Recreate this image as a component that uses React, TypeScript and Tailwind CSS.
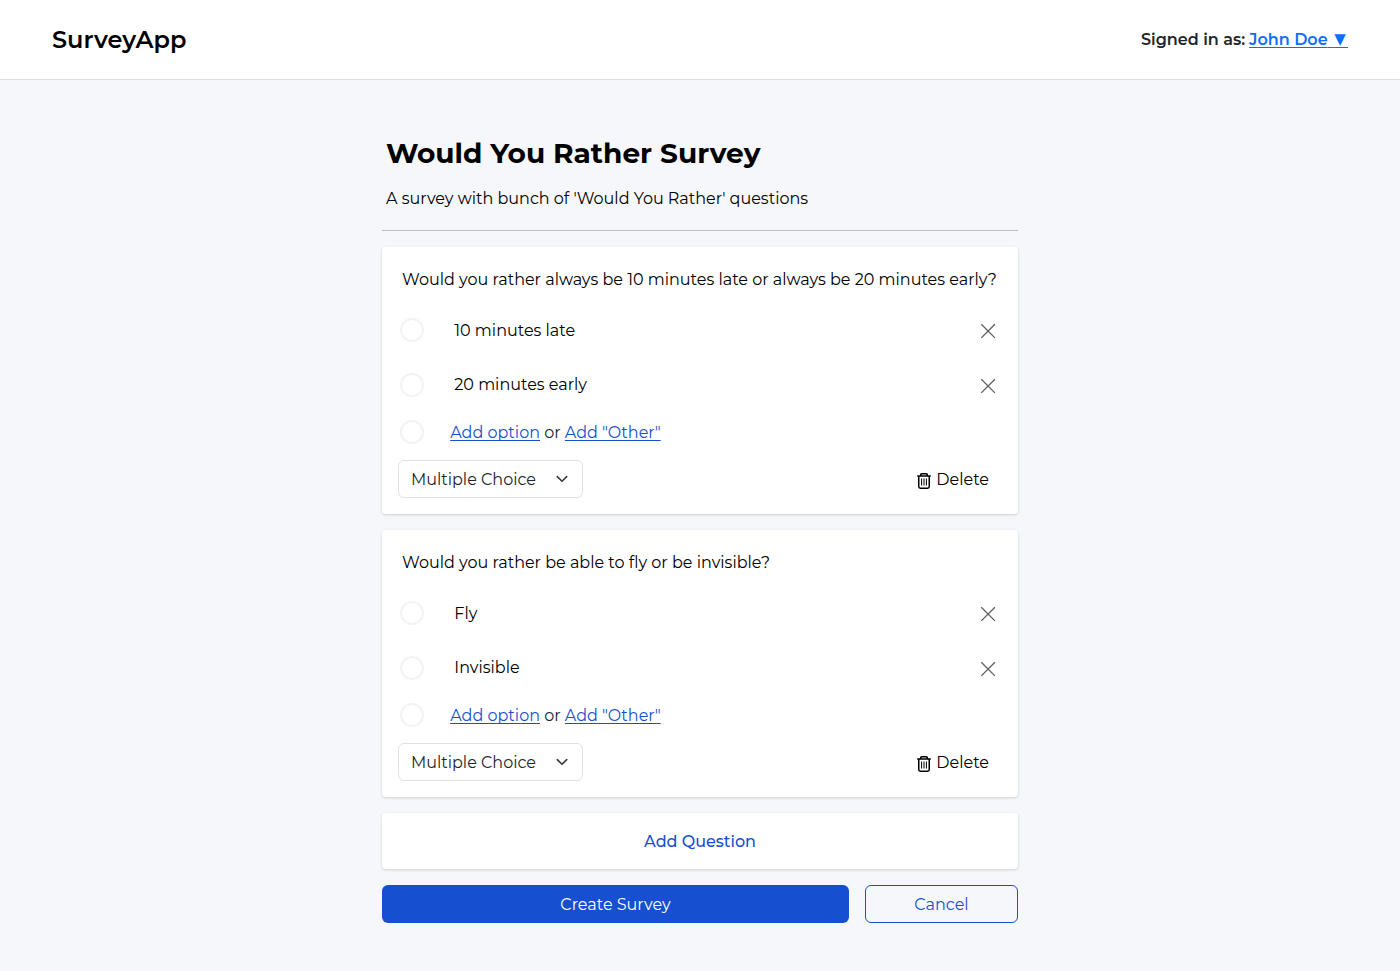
import React from "react";

type Question = { text: string; options: string[] };

const questions: Question[] = [
  {
    text: "Would you rather always be 10 minutes late or always be 20 minutes early?",
    options: ["10 minutes late", "20 minutes early"],
  },
  {
    text: "Would you rather be able to fly or be invisible?",
    options: ["Fly", "Invisible"],
  },
];

function Radio() {
  return <span className="h-6 w-6 shrink-0 rounded-full border-2 border-[#f3f3f3] bg-white" />;
}

function CloseIcon() {
  return (
    <svg width="16" height="16" viewBox="0 0 16 16" fill="none" stroke="#5c5e61" strokeWidth="1.3">
      <path d="M1.3 1.3l13.6 13.6M14.9 1.3L1.3 14.9" />
    </svg>
  );
}

function TrashIcon() {
  return (
    <svg width="16" height="18" viewBox="0 0 16 18" fill="none" stroke="#000" strokeWidth="1.5">
      <path d="M1.2 4.1h13.6M4.7 4V2.9A1.1 1.1 0 0 1 5.8 1.8h4.4a1.1 1.1 0 0 1 1.1 1.1V4M2.75 4.2V14.6a1.6 1.6 0 0 0 1.6 1.6h7.3a1.6 1.6 0 0 0 1.6-1.6V4.2" />
      <path d="M5.6 6.5v7M8 6.5v7M10.4 6.5v7" strokeWidth="1" />
    </svg>
  );
}

function QuestionCard({ q }: { q: Question }) {
  return (
    <section className="mb-4 h-[267px] rounded bg-white px-4 pt-4 shadow-[0_1px_3px_rgba(0,0,0,0.16)]">
      <div className="flex h-8 items-center whitespace-nowrap pl-1 pt-0.5 text-black">{q.text}</div>
      <div className="pt-2">
        {q.options.map((label, i) => (
          <div key={label} className={i === 0 ? "flex h-[54px] items-center" : "flex h-[55px] items-center"}>
            <span className="ml-0.5 flex"><Radio /></span>
            <span className={i === 0 ? "ml-[30.3px] flex-1 pt-0.5 text-black" : "ml-[30.3px] flex-1 text-black"}>{label}</span>
            <span className="mr-1.5 mt-0.5 flex"><CloseIcon /></span>
          </div>
        ))}
      </div>
      <div className="flex h-10 items-center">
        <span className="ml-0.5 flex"><Radio /></span>
        <span className="ml-[26.2px] whitespace-nowrap pt-0.5">
          <a className="text-[#164fd0] underline underline-offset-2 [text-decoration-skip-ink:none]">Add option</a> or{" "}
          <a className="text-[#164fd0] underline underline-offset-2 [text-decoration-skip-ink:none]">Add "Other"</a>
        </span>
      </div>
      <div className="mt-2 flex h-[38px] items-center justify-between">
        <button className="flex h-[38px] w-[185px] items-center justify-between rounded-md border border-[#dee2e6] bg-white px-3">
          <span className="pt-0.5">Multiple Choice</span>
          <svg width="16" height="16" viewBox="0 0 16 16" fill="none" stroke="#343a40" strokeWidth="1.6" strokeLinecap="round" strokeLinejoin="round">
            <path d="m3.3 5.6 4.7 4.7 4.7-4.7" />
          </svg>
        </button>
        <button className="mr-[13px] flex w-[73px] items-center pt-0.5 text-black">
          <span className="mt-0.5 shrink-0"><TrashIcon /></span>
          <span className="ml-[4.3px]">Delete</span>
        </button>
      </div>
    </section>
  );
}

export default function App() {
  return (
    <div className="min-h-[971px] bg-[#f6f7fb] font-['Montserrat','Inter',sans-serif] text-base leading-6 text-[#212529]">
      <header className="flex h-20 items-center justify-between border-b border-[#d6dcec] bg-white px-[52px]">
        <div className="text-2xl font-semibold text-black">SurveyApp</div>
        <div className="flex whitespace-nowrap font-semibold">
          <span className="mr-1">Signed in as:</span>
          <a className="text-[#0d6efd] underline underline-offset-2 [text-decoration-skip-ink:none]">
            John Doe<span className="tracking-[2.2px]"> </span>
            <span className="align-[1px] font-['DejaVu_Sans'] text-[15px] leading-none tracking-[2.2px]">▼</span>
          </a>
        </div>
      </header>
      <main className="mx-auto w-[636px] pt-[52px]">
        <h1 className="flex h-[42px] items-center whitespace-nowrap pl-1 text-[28px] font-bold text-black">Would You Rather Survey</h1>
        <p className="mt-3 flex h-6 items-center whitespace-nowrap pl-1 pt-0.5 text-black">A survey with bunch of 'Would You Rather' questions</p>
        <hr className="mb-4 mt-5 border-0 border-t border-[#bdbfc3]" />
        {questions.map((q) => (
          <QuestionCard key={q.text} q={q} />
        ))}
        <button className="flex h-14 w-full items-center justify-center rounded bg-white pt-0.5 font-medium text-[#164fd0] shadow-[0_1px_3px_rgba(0,0,0,0.16)]">Add Question</button>
        <div className="mt-4 flex gap-4">
          <button className="h-[38px] w-[467px] rounded-md bg-[#164fd0] pt-0.5 text-white">Create Survey</button>
          <button className="h-[38px] flex-1 rounded-md border border-[#164fd0] pt-0.5 text-[#164fd0]">Cancel</button>
        </div>
      </main>
    </div>
  );
}
